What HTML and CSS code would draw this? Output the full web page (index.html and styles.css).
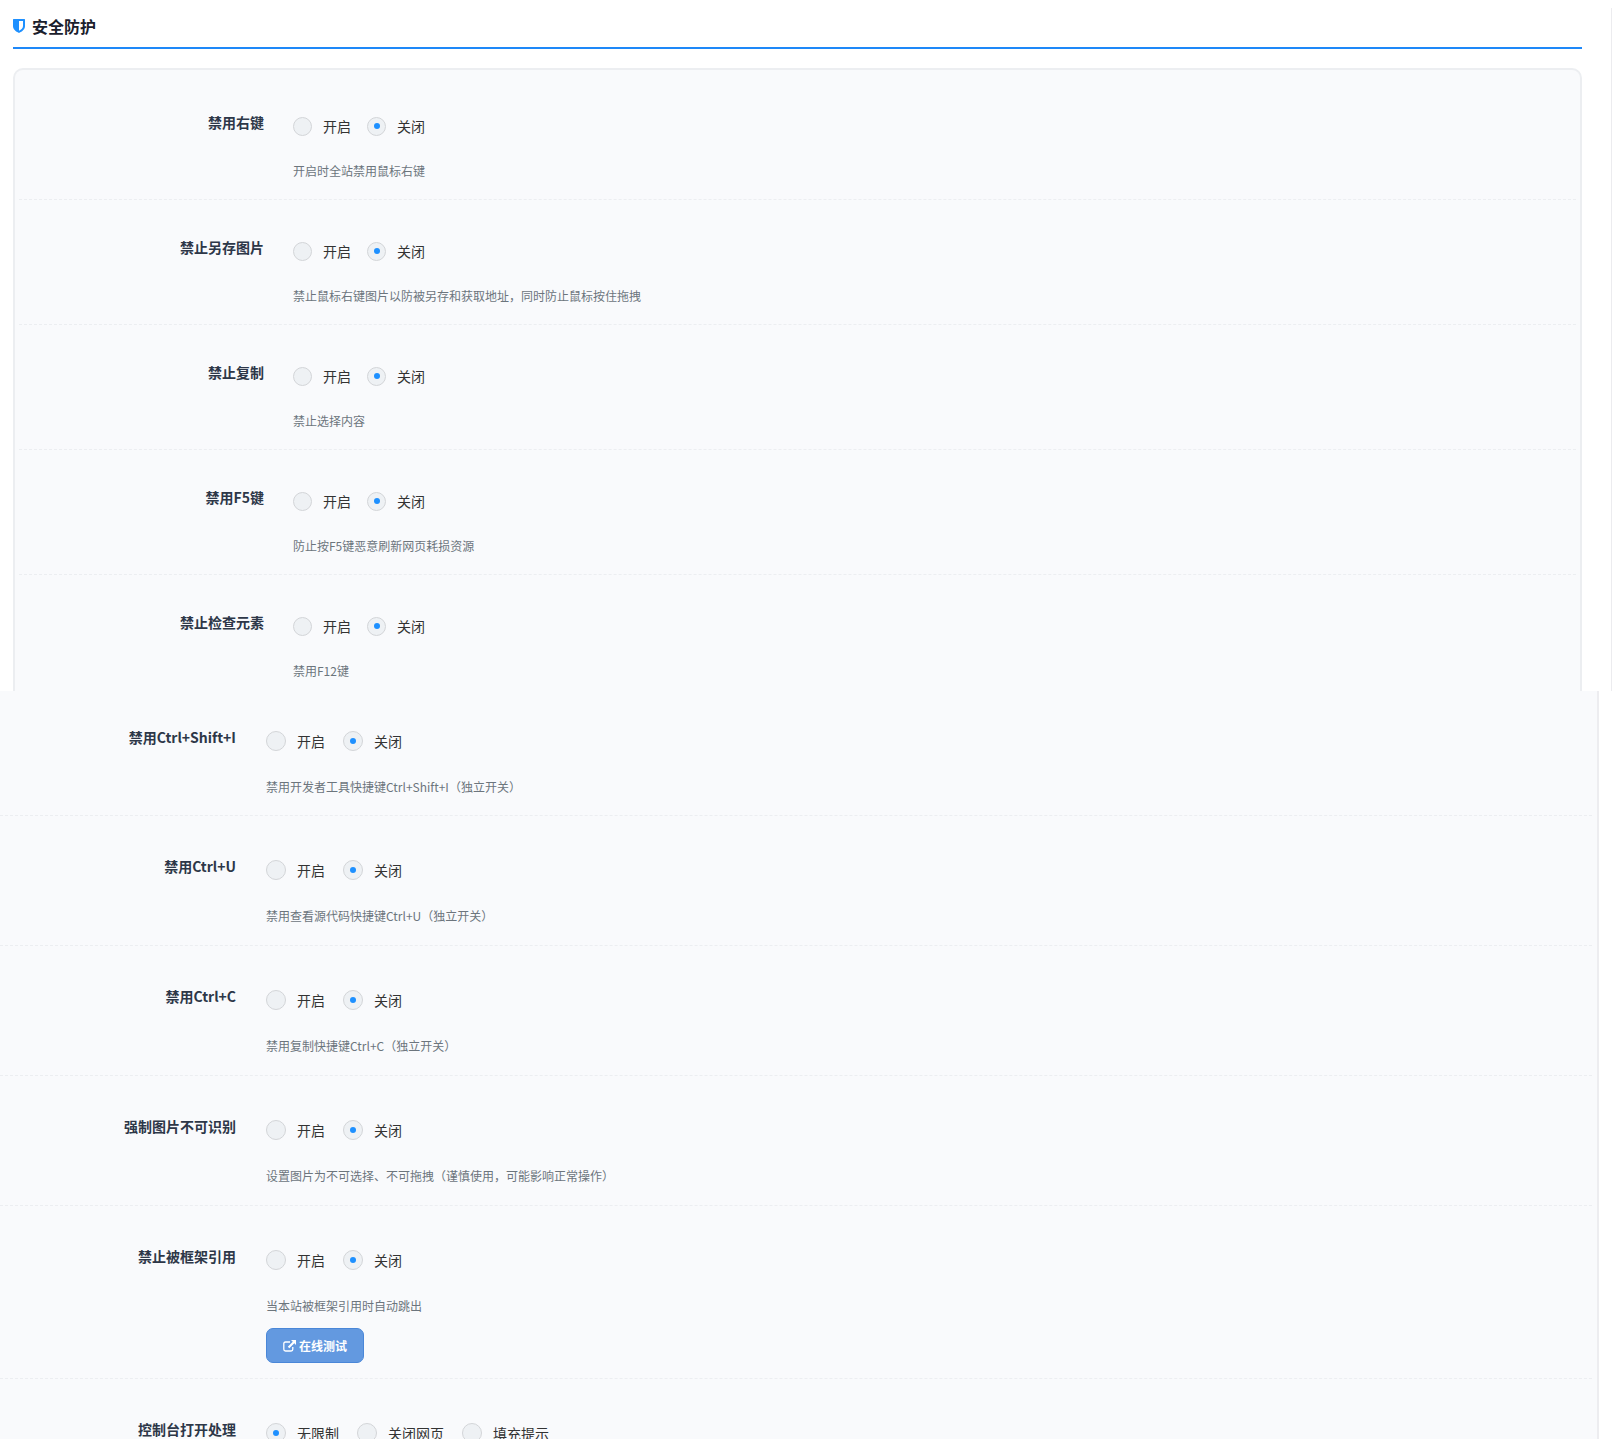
FILE: index.html
```html
<!DOCTYPE html>
<html lang="zh-CN">
<head>
<meta charset="UTF-8">
<meta name="viewport" content="width=device-width, initial-scale=1.0">
<title>安全防护</title>
<link rel="stylesheet" href="styles.css">
</head>
<body>

<section class="panel">
  <h2 class="panel-title">
    <svg class="icon-shield" viewBox="0 0 12 14" aria-hidden="true"><path fill="currentColor" fill-rule="evenodd" d="M0.6 0h10.8q.6 0 .6.6V7c0 3.200-2.600 5.400-6 7C2.600 12.400 0 10.200 0 7V.6Q0 0 .6 0zM6 2v9.800c2.400-1.300 4-2.800 4-4.800V2z"/></svg>
    安全防护
  </h2>
  <div class="card">
    <div class="row">
      <div class="name" id="n1">禁用右键</div>
      <div class="field">
        <div class="options" role="radiogroup" aria-labelledby="n1">
          <label class="option"><input type="radio" name="r1">开启</label>
          <label class="option"><input type="radio" name="r1" checked>关闭</label>
        </div>
        <p class="desc">开启时全站禁用鼠标右键</p>
      </div>
    </div>
    <div class="row">
      <div class="name" id="n2">禁止另存图片</div>
      <div class="field">
        <div class="options" role="radiogroup" aria-labelledby="n2">
          <label class="option"><input type="radio" name="r2">开启</label>
          <label class="option"><input type="radio" name="r2" checked>关闭</label>
        </div>
        <p class="desc">禁止鼠标右键图片以防被另存和获取地址，同时防止鼠标按住拖拽</p>
      </div>
    </div>
    <div class="row">
      <div class="name" id="n3">禁止复制</div>
      <div class="field">
        <div class="options" role="radiogroup" aria-labelledby="n3">
          <label class="option"><input type="radio" name="r3">开启</label>
          <label class="option"><input type="radio" name="r3" checked>关闭</label>
        </div>
        <p class="desc">禁止选择内容</p>
      </div>
    </div>
    <div class="row">
      <div class="name" id="n4">禁用F5键</div>
      <div class="field">
        <div class="options" role="radiogroup" aria-labelledby="n4">
          <label class="option"><input type="radio" name="r4">开启</label>
          <label class="option"><input type="radio" name="r4" checked>关闭</label>
        </div>
        <p class="desc">防止按F5键恶意刷新网页耗损资源</p>
      </div>
    </div>
    <div class="row">
      <div class="name" id="n5">禁止检查元素</div>
      <div class="field">
        <div class="options" role="radiogroup" aria-labelledby="n5">
          <label class="option"><input type="radio" name="r5">开启</label>
          <label class="option"><input type="radio" name="r5" checked>关闭</label>
        </div>
        <p class="desc">禁用F12键</p>
      </div>
    </div>
  </div>
</section>

<section class="panel-wide">
  <div class="row">
    <div class="name" id="n6">禁用Ctrl+Shift+I</div>
    <div class="field">
      <div class="options" role="radiogroup" aria-labelledby="n6">
        <label class="option"><input type="radio" name="r6">开启</label>
        <label class="option"><input type="radio" name="r6" checked>关闭</label>
      </div>
      <p class="desc">禁用开发者工具快捷键Ctrl+Shift+I（独立开关）</p>
    </div>
  </div>
  <div class="row">
    <div class="name" id="n7">禁用Ctrl+U</div>
    <div class="field">
      <div class="options" role="radiogroup" aria-labelledby="n7">
        <label class="option"><input type="radio" name="r7">开启</label>
        <label class="option"><input type="radio" name="r7" checked>关闭</label>
      </div>
      <p class="desc">禁用查看源代码快捷键Ctrl+U（独立开关）</p>
    </div>
  </div>
  <div class="row">
    <div class="name" id="n8">禁用Ctrl+C</div>
    <div class="field">
      <div class="options" role="radiogroup" aria-labelledby="n8">
        <label class="option"><input type="radio" name="r8">开启</label>
        <label class="option"><input type="radio" name="r8" checked>关闭</label>
      </div>
      <p class="desc">禁用复制快捷键Ctrl+C（独立开关）</p>
    </div>
  </div>
  <div class="row">
    <div class="name" id="n9">强制图片不可识别</div>
    <div class="field">
      <div class="options" role="radiogroup" aria-labelledby="n9">
        <label class="option"><input type="radio" name="r9">开启</label>
        <label class="option"><input type="radio" name="r9" checked>关闭</label>
      </div>
      <p class="desc">设置图片为不可选择、不可拖拽（谨慎使用，可能影响正常操作）</p>
    </div>
  </div>
  <div class="row row-action">
    <div class="name" id="n10">禁止被框架引用</div>
    <div class="field">
      <div class="options" role="radiogroup" aria-labelledby="n10">
        <label class="option"><input type="radio" name="r10">开启</label>
        <label class="option"><input type="radio" name="r10" checked>关闭</label>
      </div>
      <p class="desc">当本站被框架引用时自动跳出</p>
      <button type="button" class="btn">
        <svg class="icon-link" viewBox="0 0 13 12" aria-hidden="true"><path fill="none" stroke="currentColor" stroke-width="1.300" d="M7 2H2.500Q.8 2 .8 3.700v5.600Q.8 11 2.500 11h5.600q1.700 0 1.700-1.700V7"/><path fill="currentColor" d="M8 0h5v5l-1.700-1.700-5 5-1.500-1.500 5-5z"/></svg>
        在线测试
      </button>
    </div>
  </div>
  <div class="row">
    <div class="name" id="n11">控制台打开处理</div>
    <div class="field">
      <div class="options" role="radiogroup" aria-labelledby="n11">
        <label class="option"><input type="radio" name="r11" checked>无限制</label>
        <label class="option"><input type="radio" name="r11">关闭网页</label>
        <label class="option"><input type="radio" name="r11">填充提示</label>
      </div>
    </div>
  </div>
</section>

</body>
</html>
```
FILE: styles.css
```css
* {
  box-sizing: border-box;
}
body {
  margin: 0;
  height: 100vh;
  overflow: hidden;
  background-color: #fff;
  font-family: "Noto Sans CJK SC", sans-serif;
  font-size: 14px;
  color: #333;
}
.panel {
  margin-top: 8px;
  padding: 0 29px 0 13px;
  border-right: 1px solid #ececef;
}
.panel-title {
  display: flex;
  align-items: center;
  gap: 7px;
  height: 41px;
  margin: 0 0 19px;
  padding-bottom: 4px;
  border-bottom: 2px solid #1e88f8;
  font-size: 16px;
  font-weight: 600;
  color: #1a202c;
}
.icon-shield {
  width: 12px;
  height: 14px;
  color: #1e90ff;
}
.card {
  padding: 5px 4px 0;
  border: 2px solid #eceef1;
  border-bottom: 0;
  border-radius: 10px 10px 0 0;
  background-color: #f9fafc;
}
.row {
  display: grid;
  grid-template-columns: 245px 1fr;
  gap: 29px;
  padding: 29px 0 19px;
  border-bottom: 1px dashed #eceef1;
}
.card .row:last-child {
  padding-bottom: 11px;
  border-bottom: 0;
}
.name {
  margin-top: 8px;
  line-height: 20px;
  text-align: right;
  font-weight: 600;
  color: #2d3748;
}
.options {
  display: flex;
  align-items: center;
  gap: 16px;
  height: 44px;
}
.option {
  display: flex;
  align-items: center;
  gap: 11px;
  line-height: 20px;
}
.option input {
  appearance: none;
  display: grid;
  place-content: center;
  width: 19px;
  height: 19px;
  margin: 0;
  border: 1px solid #d3d5d8;
  border-radius: 50%;
  background-color: #eef1f4;
}
.option input:checked::before {
  content: "";
  width: 6px;
  height: 6px;
  border-radius: 50%;
  background-color: #1e90ff;
}
.desc {
  margin: 14px 0 0;
  font-size: 12px;
  line-height: 18px;
  color: #6c757d;
}

.panel-wide {
  margin-right: 13px;
  padding-right: 5px;
  border-right: 2px solid #ededf0;
  background-color: #f9fafc;
}
.panel-wide .row {
  grid-template-columns: 236px 1fr;
  gap: 30px;
  padding: 31px 0 20px;
}
.panel-wide .row:first-child {
  padding: 27px 0 19px;
}
.panel-wide .row-action {
  padding-bottom: 15px;
}
.panel-wide .name {
  margin-top: 9px;
}
.panel-wide .options {
  gap: 18px;
  height: 46px;
}
.panel-wide .option input {
  width: 20px;
  height: 20px;
}
.btn {
  display: flex;
  align-items: center;
  gap: 3px;
  height: 35px;
  margin-top: 13px;
  padding: 0 16px;
  border: 1px solid #4a87d8;
  border-radius: 7px;
  background-color: #6399e0;
  font-family: inherit;
  font-size: 12px;
  font-weight: 600;
  color: #fff;
  cursor: pointer;
}
.icon-link {
  width: 13px;
  height: 12px;
}
```
